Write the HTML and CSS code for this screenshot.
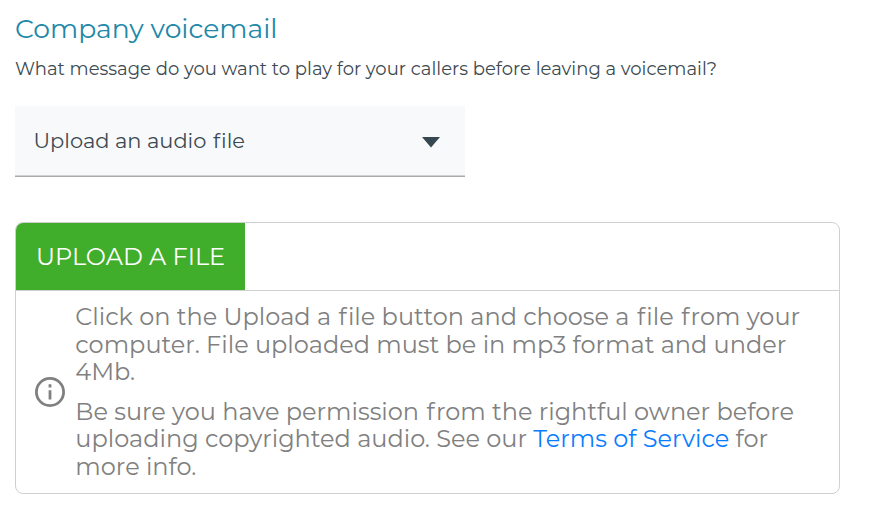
FILE: index.html
```html
<!doctype html>
<html lang="en">
    <head>
        <meta charset="utf-8">
        <title>Company voicemail</title>
        <link rel="stylesheet" href="styles.css">
    </head>
    <body>
        <h1>Company voicemail</h1>
        <p class="question">What message do you want to play for your callers before leaving a voicemail?</p>

        <div class="select" role="button" tabindex="0">
            <span>Upload an audio <span class="loose">file</span></span>
            <svg class="caret" width="18" height="11" viewBox="0 0 18 11"><path d="M0 0h18l-9 10.5z"/></svg>
        </div>

        <div class="upload">
            <div class="uploadHeader">
                <a class="button"><span>UPLOAD A FILE</span></a>
            </div>
            <div class="info">
                <svg class="icon" width="32" height="32" viewBox="0 0 32 32">
                    <circle cx="16" cy="16" r="13.6"/>
                    <path d="M16 8.2v3.4M16 14.2v9.4"/>
                </svg>
                <div class="text">
                    <p>Click on the Upload a <span class="loose">file</span> button and choose a <span class="loose">file</span> <span class="loose">from</span> your<br>
                    computer. File uploaded must be in mp3 format and under<br>
                    4Mb.</p>
                    <p>Be sure you have permission <span class="loose">from</span> the rightful owner before<br>
                    uploading copyrighted audio. See our <a href="#">Terms of Service</a> for<br>
                    more info.</p>
                </div>
            </div>
        </div>
    </body>
</html>
```

FILE: styles.css
```css
body {
    margin: 0;
    padding: 12px 15px;
    width: 825px;
    color: #3c4a51;
    background-color: #fff;
    font-family: Montserrat, Inter, sans-serif;
    font-variant-ligatures: none;
}
h1 {
    margin: 0;
    color: #2188a8;
    font-size: 26.6px;
    font-weight: 400;
    line-height: 34px;
}
p {
    margin: 0;
}
span.loose {
    margin-left: 0.05em;
}
span.loose::first-letter {
    letter-spacing: 0.05em;
}
span.loose {
    display: inline-block;
}

p.question {
    margin-top: 10px;
    font-size: 18.02px;
    font-weight: 400;
    line-height: 26px;
    white-space: nowrap;
}

div.select {
    display: flex;
    align-items: center;
    justify-content: space-between;
    box-sizing: border-box;
    width: 450px;
    height: 71px;
    margin-top: 24px;
    padding: 0 25.5px 1px 18.5px;
    background-color: #f8f9fb;
    border-bottom: 1px solid #a9abad;
    box-shadow: inset 0 -1px #d0d1d2;
    font-size: 20.95px;
    font-weight: 400;
}
svg.caret {
    margin-top: 3px;
    fill: #37474f;
}

div.upload {
    box-sizing: border-box;
    height: 272px;
    margin-top: 45px;
    border: 1px solid #d0d0d0;
    border-radius: 8px;
    overflow: hidden;
}
div.uploadHeader {
    display: flex;
    height: 67px;
    border-bottom: 1px solid #d0d0d0;
}
a.button {
    box-sizing: border-box;
    width: 229px;
    padding-left: 20px;
    background-color: #40ae2a;
    color: #fff;
    font-size: 24px;
    font-weight: 400;
    line-height: 67px;
    white-space: nowrap;
    cursor: pointer;
}

div.info {
    display: flex;
    align-items: center;
    padding: 12px 18px 0;
}
svg.icon {
    flex: none;
    margin-right: 9.3px;
    fill: none;
    stroke: #808080;
    stroke-width: 2.8;
}
div.text {
    color: #808080;
    font-size: 24px;
    font-weight: 400;
    line-height: 27.6px;
    white-space: nowrap;
}
div.text p + p {
    margin-top: 12px;
}
div.text a {
    color: #0a7dff;
    text-decoration: none;
}
```
